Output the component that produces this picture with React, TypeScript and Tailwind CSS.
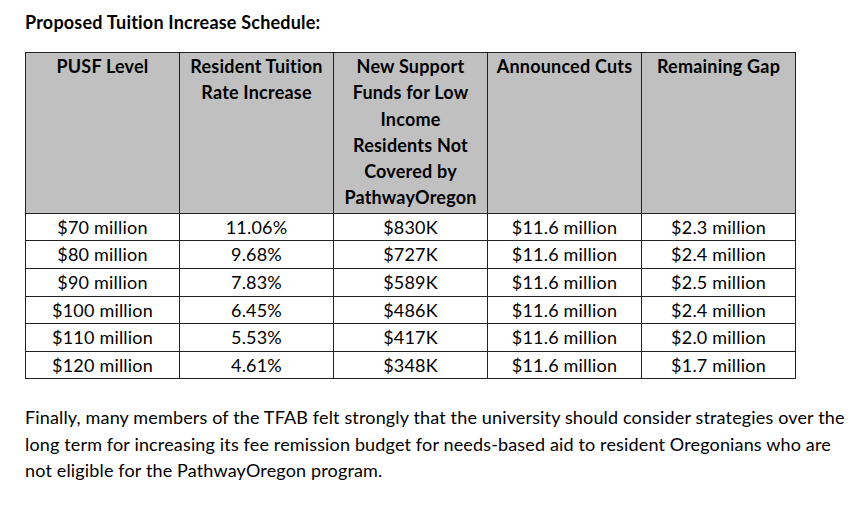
import React from "react";

const rows = [
  ["$70 million", "11.06%", "$830K", "$11.6 million", "$2.3 million"],
  ["$80 million", "9.68%", "$727K", "$11.6 million", "$2.4 million"],
  ["$90 million", "7.83%", "$589K", "$11.6 million", "$2.5 million"],
  ["$100 million", "6.45%", "$486K", "$11.6 million", "$2.4 million"],
  ["$110 million", "5.53%", "$417K", "$11.6 million", "$2.0 million"],
  ["$120 million", "4.61%", "$348K", "$11.6 million", "$1.7 million"],
];

export default function App() {
  return (
    <div className="w-[850px] h-[506px] bg-white text-black font-['Lato',sans-serif] tracking-[0.2px] pl-[25px] pt-[10px]">
      <div className="font-bold text-[18px] leading-[24px]">Proposed Tuition Increase Schedule:</div>
      <table className="mt-[18px] border-collapse table-fixed w-[771px] text-[18px]">
        <thead>
          <tr className="bg-[#c0c0c0] align-top">
            {[
              ["PUSF Level"],
              ["Resident Tuition", "Rate Increase"],
              ["New Support", "Funds for Low", "Income", "Residents Not", "Covered by", "PathwayOregon"],
              ["Announced Cuts"],
              ["Remaining Gap"],
            ].map((lines, i) => (
              <th key={i} className="w-[154px] border border-[#222] font-bold text-center leading-[26.3px] pt-0 pb-[2px] px-0">
                {lines.map((l, j) => (
                  <div key={j}>{l}</div>
                ))}
              </th>
            ))}
          </tr>
        </thead>
        <tbody>
          {rows.map((r, i) => (
            <tr key={i}>
              {r.map((c, j) => (
                <td key={j} className="border border-[#222] text-center leading-[26.6px] p-0">
                  {c}
                </td>
              ))}
            </tr>
          ))}
        </tbody>
      </table>
      <div className="mt-[25px] text-[18px] leading-[26.5px] tracking-[0.15px] whitespace-nowrap">
        <div>Finally, many members of the TFAB felt strongly that the university should consider strategies over the</div>
        <div>long term for increasing its fee remission budget for needs-based aid to resident Oregonians who are</div>
        <div>not eligible for the PathwayOregon program.</div>
      </div>
    </div>
  );
}
